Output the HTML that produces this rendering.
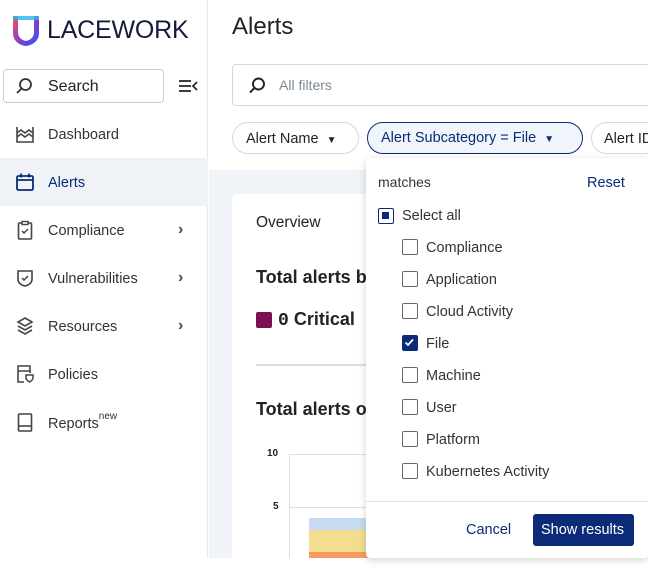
<!DOCTYPE html>
<html><head><meta charset="utf-8"><style>
*{box-sizing:border-box;margin:0;padding:0}
body{width:648px;height:558px;overflow:hidden;font-family:"Liberation Sans",sans-serif;background:#fff;position:relative;color:#222;line-height:1.4}
.abs{position:absolute}
.side{left:0;top:0;width:208px;height:558px;background:#fff;border-right:1px solid #e6e9ee}
.nav{position:absolute;left:0;width:208px;height:48px;display:flex;align-items:center;font-size:14.5px;color:#333}
.nav svg{position:absolute;left:15px}
.nav span{position:absolute;left:48px;top:15px}
.chev{position:absolute;left:178px;font-size:16px;color:#444}
.cb{position:absolute;left:402px;width:16px;height:16px;border:1.5px solid #666;border-radius:2px;background:#fff}
.lbl{position:absolute;left:426px;font-size:14.5px;color:#333}
</style></head><body>
<div class="abs side">
  <svg class="abs" style="left:12px;top:15px" width="28" height="32" viewBox="0 0 28 32">
    <defs><linearGradient id="g" x1="0" y1="0" x2="1" y2="1"><stop offset="0" stop-color="#f0545e"/><stop offset="0.6" stop-color="#7a3fd0"/><stop offset="1" stop-color="#2a5cf0"/></linearGradient></defs>
    <path d="M1 1h5v16c0 5 3 8 8 9 5-1 8-4 8-9V1h5v17c0 7-5 12-13 13C6 30 1 25 1 18z" fill="url(#g)"/>
    <rect x="1" y="1" width="26" height="4" fill="#28b8e8" opacity=".8"/>
  </svg>
  <div class="abs" style="left:47px;top:13px;font-size:25px;font-weight:500;color:#141a3c;letter-spacing:-0.2px">LACEWORK</div>
  <div class="abs" style="left:3px;top:69px;width:161px;height:34px;border:1px solid #ccc;border-radius:4px"></div>
  <svg class="abs" style="left:15px;top:77px" width="18" height="18" viewBox="0 0 18 18"><circle cx="10.5" cy="7.5" r="5.5" fill="none" stroke="#333" stroke-width="1.8"/><path d="M6.5 11.5L2 16" stroke="#333" stroke-width="1.8"/></svg>
  <div class="abs" style="left:48px;top:76px;font-size:16px;color:#222">Search</div>
  <svg class="abs" style="left:178px;top:79px" width="20" height="14" viewBox="0 0 20 14"><path d="M1 2h12M1 7h12M1 12h12M19 3l-4 4 4 4" stroke="#222" stroke-width="1.7" fill="none"/></svg>
  <div class="nav" style="top:110px"><svg width="20" height="20" viewBox="0 0 20 20"><path d="M2 3v15h16V3M2 9l4-3 4 3 4-3 4 3M2 13l4-3 4 3 4-3 4 3" fill="none" stroke="#444" stroke-width="1.6"/></svg><span>Dashboard</span></div>
  <div class="nav" style="top:158px;background:#eff3f8;color:#0b2a78"><svg width="20" height="20" viewBox="0 0 20 20"><rect x="2" y="4" width="16" height="14" rx="1.5" fill="none" stroke="#0b2a78" stroke-width="1.8"/><path d="M2 8h16M6 1.5v4M14 1.5v4" stroke="#0b2a78" stroke-width="1.8"/></svg><span>Alerts</span></div>
  <div class="nav" style="top:206px"><svg width="20" height="20" viewBox="0 0 20 20"><rect x="3.5" y="3" width="13" height="16" rx="1" fill="none" stroke="#444" stroke-width="1.6"/><rect x="7" y="1.5" width="6" height="3" fill="#fff" stroke="#444" stroke-width="1.4"/><path d="M7 11l2 2 4-4" fill="none" stroke="#444" stroke-width="1.5"/></svg><span>Compliance</span><b class="chev">›</b></div>
  <div class="nav" style="top:254px"><svg width="20" height="20" viewBox="0 0 20 20"><path d="M3 3h14v8c0 4-3 6-7 7-4-1-7-3-7-7z" fill="none" stroke="#444" stroke-width="1.6"/><path d="M7 10l2 2 4-4" fill="none" stroke="#444" stroke-width="1.5"/></svg><span>Vulnerabilities</span><b class="chev">›</b></div>
  <div class="nav" style="top:302px"><svg width="20" height="20" viewBox="0 0 20 20"><path d="M10 2l7 4-7 4-7-4zM3 10l7 4 7-4M3 14l7 4 7-4" fill="none" stroke="#444" stroke-width="1.6"/></svg><span>Resources</span><b class="chev">›</b></div>
  <div class="nav" style="top:350px"><svg width="20" height="20" viewBox="0 0 20 20"><path d="M9 18H3V2h12v7M3 7h12" fill="none" stroke="#444" stroke-width="1.6"/><path d="M11 11h7v3c0 2-2 3-3.5 4-1.5-1-3.5-2-3.5-4z" fill="none" stroke="#444" stroke-width="1.5"/></svg><span>Policies</span></div>
  <div class="nav" style="top:398px"><svg width="20" height="20" viewBox="0 0 20 20"><rect x="3.5" y="2" width="13" height="17" rx="1" fill="none" stroke="#444" stroke-width="1.6"/><path d="M3.5 14h13" stroke="#444" stroke-width="1.6"/></svg><span>Reports<sup style="font-size:10px;position:relative;top:-3px">new</sup></span></div>
</div>

<div class="abs" style="left:209px;top:170px;width:439px;height:388px;background:#f0f3f7"></div>
<div class="abs" style="left:232px;top:13px;font-size:24px;font-weight:500;color:#222;line-height:1.15">Alerts</div>
<div class="abs" style="left:232px;top:64px;width:430px;height:42px;border:1px solid #d5d8dc;border-radius:4px"></div>
<svg class="abs" style="left:247px;top:76px" width="20" height="20" viewBox="0 0 20 20"><circle cx="11.5" cy="8" r="5.5" fill="none" stroke="#222" stroke-width="1.9"/><path d="M7.5 12L3 16.5" stroke="#222" stroke-width="2"/></svg>
<div class="abs" style="left:279px;top:76px;font-size:14px;color:#7d8a93">All filters</div>
<div class="abs" style="left:232px;top:122px;width:127px;height:32px;border:1px solid #d5d8dc;border-radius:16px;font-size:14.5px;padding:6px 0 0 13px;color:#222">Alert Name <span style="font-size:10px;margin-left:4px">▼</span></div>
<div class="abs" style="left:367px;top:122px;width:216px;height:32px;border:1.5px solid #0b2a78;border-radius:16px;background:#f0f5fb;font-size:14.5px;padding:5px 0 0 13px;color:#0b2a78">Alert Subcategory = File <span style="font-size:10px;margin-left:4px">▼</span></div>
<div class="abs" style="left:591px;top:122px;width:80px;height:32px;border:1px solid #d5d8dc;border-radius:16px;font-size:14.5px;padding:6px 0 0 12px;color:#222;overflow:hidden;white-space:nowrap">Alert ID</div>

<div class="abs" style="left:232px;top:194px;width:430px;height:380px;background:#fff;border-radius:6px"></div>
<div class="abs" style="left:256px;top:212px;font-size:15.5px;color:#222">Overview</div>
<div class="abs" style="left:256px;top:266px;font-size:18px;font-weight:bold;color:#222;line-height:1.3">Total alerts by</div>
<div class="abs" style="left:256px;top:312px;width:16px;height:16px;background:#7a0f52;border-radius:2px"></div>
<div class="abs" style="left:278px;top:308px;font-size:18px;font-weight:bold;color:#222;line-height:1.3"><span style="font-family:'Liberation Mono',monospace">0</span> Critical</div>
<div class="abs" style="left:256px;top:364px;width:130px;height:2px;background:#ddd"></div>
<div class="abs" style="left:256px;top:398px;font-size:18px;font-weight:bold;color:#222;line-height:1.3">Total alerts o</div>
<div class="abs" style="left:267px;top:448px;font-size:10px;font-weight:bold;color:#222;line-height:1.15">10</div>
<div class="abs" style="left:273px;top:501px;font-size:10px;font-weight:bold;color:#222;line-height:1.15">5</div>
<div class="abs" style="left:289px;top:454px;width:100px;height:1px;background:#ddd"></div>
<div class="abs" style="left:289px;top:454px;width:1px;height:104px;background:#ddd"></div>
<div class="abs" style="left:289px;top:507px;width:100px;height:1px;background:#ddd"></div>
<div class="abs" style="left:309px;top:518px;width:60px;height:12px;background:#c6dbef"></div>
<div class="abs" style="left:309px;top:530px;width:60px;height:22px;background:#f3dd8e"></div>
<div class="abs" style="left:309px;top:552px;width:60px;height:6px;background:#f79a5e"></div>

<div class="abs" style="left:366px;top:158px;width:282px;height:400px;background:#fff;border-radius:4px;box-shadow:0 2px 8px rgba(0,0,0,.18)"></div>
<div class="abs" style="left:378px;top:173px;font-size:14px;color:#333">matches</div>
<div class="abs" style="left:587px;top:173px;font-size:14.5px;color:#0b2a78">Reset</div>
<div class="abs" style="left:378px;top:208px;width:16px;height:16px;border:1.5px solid #0b2a78;border-radius:2px"><div style="position:absolute;left:3px;top:3px;width:7px;height:7px;background:#0b2a78"></div></div>
<div class="abs" style="left:402px;top:206px;font-size:14.5px;color:#333">Select all</div>
<div class="cb" style="top:239px"></div><div class="lbl" style="top:238px">Compliance</div>
<div class="cb" style="top:271px"></div><div class="lbl" style="top:270px">Application</div>
<div class="cb" style="top:303px"></div><div class="lbl" style="top:302px">Cloud Activity</div>
<div class="cb" style="top:335px;background:#0b2a78;border-color:#0b2a78"><svg width="13" height="13" viewBox="0 0 13 13" style="position:absolute;left:0;top:0"><path d="M2.5 6.5l2.5 2.5 5-5.5" stroke="#fff" stroke-width="1.8" fill="none"/></svg></div><div class="lbl" style="top:334px">File</div>
<div class="cb" style="top:367px"></div><div class="lbl" style="top:366px">Machine</div>
<div class="cb" style="top:399px"></div><div class="lbl" style="top:398px">User</div>
<div class="cb" style="top:431px"></div><div class="lbl" style="top:430px">Platform</div>
<div class="cb" style="top:463px"></div><div class="lbl" style="top:462px">Kubernetes Activity</div>
<div class="abs" style="left:366px;top:501px;width:282px;height:1px;background:#e2e2e2"></div>
<div class="abs" style="left:466px;top:520px;font-size:14.5px;color:#0b2a78">Cancel</div>
<div class="abs" style="left:533px;top:514px;width:101px;height:32px;background:#0b2a78;border-radius:3px;color:#fff;font-size:14.5px;padding:6px 0 0 8px">Show results</div>
</body></html>
